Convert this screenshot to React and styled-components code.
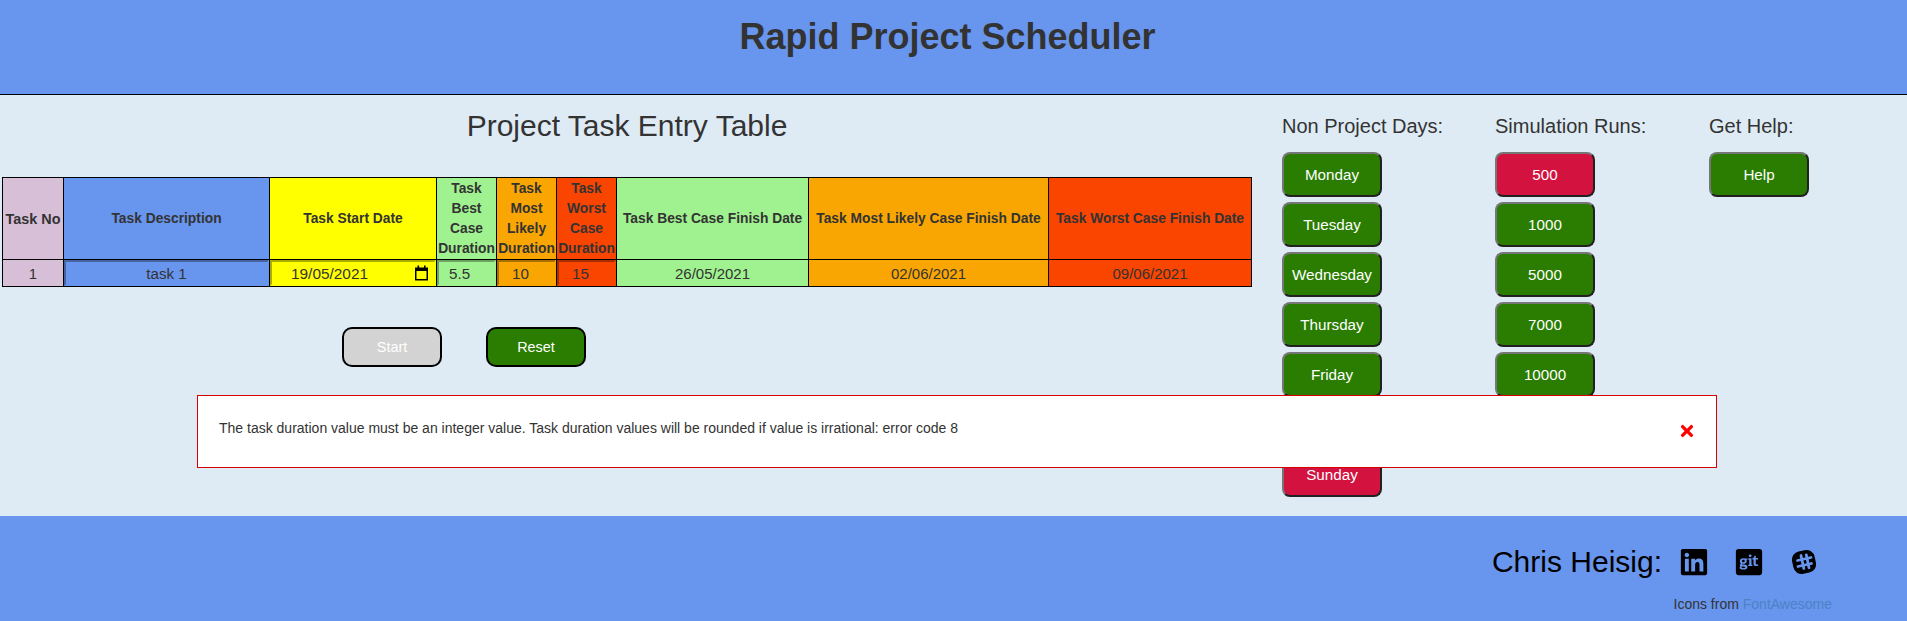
import React from "react";
import styled, { createGlobalStyle } from "styled-components";
import { FaLinkedin, FaGitSquare, FaTimes } from "react-icons/fa";

const Global = createGlobalStyle`
  html, body { margin: 0; padding: 0; }
  body { font-family: "Liberation Sans", Arial, sans-serif; color: #333; background: #deebf5; }
`;
const Page = styled.div`position: relative; width: 1907px; height: 621px; overflow: hidden; display: flex; flex-direction: column;`;
const Header = styled.header`
  height: 94px; flex: none; background: #6895ee; border-bottom: 1px solid #000;
  display: flex; justify-content: center; padding-right: 12px; box-sizing: content-box;
`;
const Title = styled.h1`margin: 16px 0 0; font-size: 36px; line-height: 41px; font-weight: 700; color: #333;`;
const Main = styled.main`flex: 1; min-height: 0; display: flex; align-items: flex-start;`;
const Left = styled.section`width: 1282px; flex: none; display: flex; flex-direction: column; padding-left: 2px; box-sizing: border-box;`;
const TableTitle = styled.h2`margin: 13px 0 0; width: 1250px; text-align: center; font-size: 30px; line-height: 36px; font-weight: 400; color: #333;`;
const Table = styled.table`
  margin-top: 33px; width: 1249px; border-collapse: collapse; table-layout: fixed;
  font-size: 15px; color: #333;
`;
const Th = styled.th`
  background: ${p => p.$bg}; border: 1px solid #000; padding: 0; font-size: ${p => p.$fs || 13.8}px; line-height: 20px; font-weight: 700;
  height: 81px; text-align: center; overflow: visible; white-space: ${p => p.$nowrap ? "nowrap" : "normal"};
`;
const Td = styled.td`background: ${p => p.$bg}; border: 1px solid #000; padding: 0; height: 26px; text-align: center; line-height: 16px;`;
const Plain = styled.div`padding-top: 1px; height: 26px; box-sizing: border-box; line-height: 25px;`;
const CellInput = styled.input`
  display: block; width: 100%; height: 26px; box-sizing: border-box; margin: 0;
  padding: ${p => p.$top || 1}px ${p => p.$pad || 2}px 0;
  background: transparent; border: 2px solid transparent; border-top-color: rgba(0,0,0,.32); border-left-color: rgba(0,0,0,.32);
  font: ${p => p.$fs || 15.2}px "Liberation Sans", Arial, sans-serif; color: #333; text-align: ${p => p.$align || "left"};
  outline: none;
`;
const DateBox = styled.div`position: relative;`;
const CalIcon = styled.svg`position: absolute; right: 7px; top: 5px; width: 15px; height: 16px;`;
const Actions = styled.div`display: flex; gap: 44px; margin: 40px 0 0 340px;`;
const ActionBtn = styled.button`
  width: 100px; height: 40px; border: 2px solid #000; border-radius: 10px; box-sizing: border-box;
  background: ${p => p.disabled ? "#d3d3d3" : "#2a7d00"}; color: #fff; font: 14.4px "Liberation Sans", Arial, sans-serif;
`;
const Side = styled.aside`display: flex; flex: none;`;
const SideCol = styled.div`width: ${p => p.$w}px; flex: none; display: flex; flex-direction: column; align-items: flex-start;`;
const SideTitle = styled.h3`margin: 21px 0 16px; font-size: 20px; line-height: 20px; font-weight: 400; color: #333; white-space: nowrap;`;
const Buttons = styled.div`display: flex; flex-direction: column; gap: 5px;`;
const Btn = styled.button`
  width: 100px; height: 45px; border-radius: 8px; border: 2px outset #767676; box-sizing: border-box; padding: 0;
  background: ${p => p.$on ? "#d3123f" : "#2a7d00"}; color: #fff; font: 15.2px "Liberation Sans", Arial, sans-serif;
`;
const Footer = styled.footer`
  height: 105px; flex: none; background: #6895ee; display: flex; flex-direction: column; align-items: flex-end;
  padding-right: 88px; box-sizing: border-box;
`;
const Contact = styled.div`display: flex; align-items: center; margin-top: 26px; height: 40px;`;
const Name = styled.span`font-size: 30px; color: #000; margin-right: 17px;`;
const IconLink = styled.a`display: flex; width: 30px; height: 30px; align-items: center; justify-content: center; color: #000; margin-left: ${p => p.$ml || 0}px;`;
const Credit = styled.div`margin-top: 14px; margin-right: -13px; font-size: 14px; color: #333; white-space: nowrap;`;
const CreditLink = styled.a`color: #4d82c4; text-decoration: none;`;
const Alert = styled.div`
  position: absolute; left: 197px; top: 395px; width: 1520px; height: 73px; box-sizing: border-box;
  background: #fff; border: 1px solid #d80000; display: flex; justify-content: space-between; align-items: flex-start;
  padding: 24px 20px 0 21px; font-size: 14px; line-height: 16px; color: #333;
`;
const Close = styled.button`background: none; border: 0; padding: 0; color: #f00; font-size: 18px; line-height: 0; margin-top: 2px;`;

const days = ["Monday", "Tuesday", "Wednesday", "Thursday", "Friday", "Saturday", "Sunday"];
const runs = ["500", "1000", "5000", "7000", "10000"];

const SlackBlob = () => (
  <svg width="26" height="26" viewBox="0 0 26 26" aria-hidden="true">
    <rect x="1.5" y="1.5" width="23" height="23" rx="8.5" fill="#000" transform="rotate(-12 13 13)" />
    <g stroke="#6895ee" strokeWidth="2.8" strokeLinecap="round" fill="none">
      <path d="M10 6.500 12.800 19.500" />
      <path d="M15.300 5.800 18 18.800" />
      <path d="M6.500 11.500 20 8.500" />
      <path d="M7 17.500 20.500 14.500" />
    </g>
  </svg>
);

export default function App() {
  return (
    <Page>
      <Global />
      <Header><Title>Rapid Project Scheduler</Title></Header>
      <Main>
        <Left>
          <TableTitle>Project Task Entry Table</TableTitle>
          <Table>
            <colgroup>
              {[61, 206, 167, 60, 60, 60, 192, 240, 203].map((w, i) => <col key={i} style={{ width: w }} />)}
            </colgroup>
            <thead>
              <tr>
                <Th $bg="#d8bfd8" $fs={14.4}>Task No</Th>
                <Th $bg="#6895ee">Task Description</Th>
                <Th $bg="#ffff00">Task Start Date</Th>
                <Th $bg="#9ff28f">Task Best Case Duration</Th>
                <Th $bg="#f9a602">Task Most Likely Duration</Th>
                <Th $bg="#f94500">Task Worst Case Duration</Th>
                <Th $bg="#9ff28f" $nowrap>Task Best Case Finish Date</Th>
                <Th $bg="#f9a602" $nowrap>Task Most Likely Case Finish Date</Th>
                <Th $bg="#f94500" $nowrap>Task Worst Case Finish Date</Th>
              </tr>
            </thead>
            <tbody>
              <tr>
                <Td $bg="#d8bfd8"><Plain>1</Plain></Td>
                <Td $bg="#6895ee"><CellInput defaultValue="task 1" $align="center" /></Td>
                <Td $bg="#ffff00">
                  <DateBox>
                    <CellInput defaultValue="19/05/2021" $pad={19} $fs={15.4} $top={2} />
                    <CalIcon viewBox="0 0 15 16" aria-hidden="true">
                      <path d="M1 2.500h13v13H1z M2.500 6v8h10V6z" fill="#000" fillRule="evenodd" />
                      <path d="M3.500 0.500h1.600v3H3.500z M10 0.500h1.600v3H10z" fill="#000" />
                    </CalIcon>
                  </DateBox>
                </Td>
                <Td $bg="#9ff28f"><CellInput defaultValue="5.5" $pad={10} /></Td>
                <Td $bg="#f9a602"><CellInput defaultValue="10" $pad={13} /></Td>
                <Td $bg="#f94500"><CellInput defaultValue="15" $pad={13} /></Td>
                <Td $bg="#9ff28f"><Plain>26/05/2021</Plain></Td>
                <Td $bg="#f9a602"><Plain>02/06/2021</Plain></Td>
                <Td $bg="#f94500"><Plain>09/06/2021</Plain></Td>
              </tr>
            </tbody>
          </Table>
          <Actions>
            <ActionBtn disabled>Start</ActionBtn>
            <ActionBtn>Reset</ActionBtn>
          </Actions>
        </Left>
        <Side>
          <SideCol $w={213}>
            <SideTitle>Non Project Days:</SideTitle>
            <Buttons>
              {days.map(d => <Btn key={d} $on={d === "Saturday" || d === "Sunday"}>{d}</Btn>)}
            </Buttons>
          </SideCol>
          <SideCol $w={214}>
            <SideTitle>Simulation Runs:</SideTitle>
            <Buttons>
              {runs.map(r => <Btn key={r} $on={r === "500"}>{r}</Btn>)}
            </Buttons>
          </SideCol>
          <SideCol $w={198}>
            <SideTitle>Get Help:</SideTitle>
            <Buttons><Btn>Help</Btn></Buttons>
          </SideCol>
        </Side>
      </Main>
      <Footer>
        <Contact>
          <Name>Chris Heisig:</Name>
          <IconLink href="#"><FaLinkedin size={30} /></IconLink>
          <IconLink href="#" $ml={25}><FaGitSquare size={30} /></IconLink>
          <IconLink href="#" $ml={25}><SlackBlob /></IconLink>
        </Contact>
        <Credit>Icons from <CreditLink href="#">FontAwesome</CreditLink></Credit>
      </Footer>
      <Alert>
        <span>The task duration value must be an integer value. Task duration values will be rounded if value is irrational: error code 8</span>
        <Close aria-label="Close"><FaTimes /></Close>
      </Alert>
    </Page>
  );
}
